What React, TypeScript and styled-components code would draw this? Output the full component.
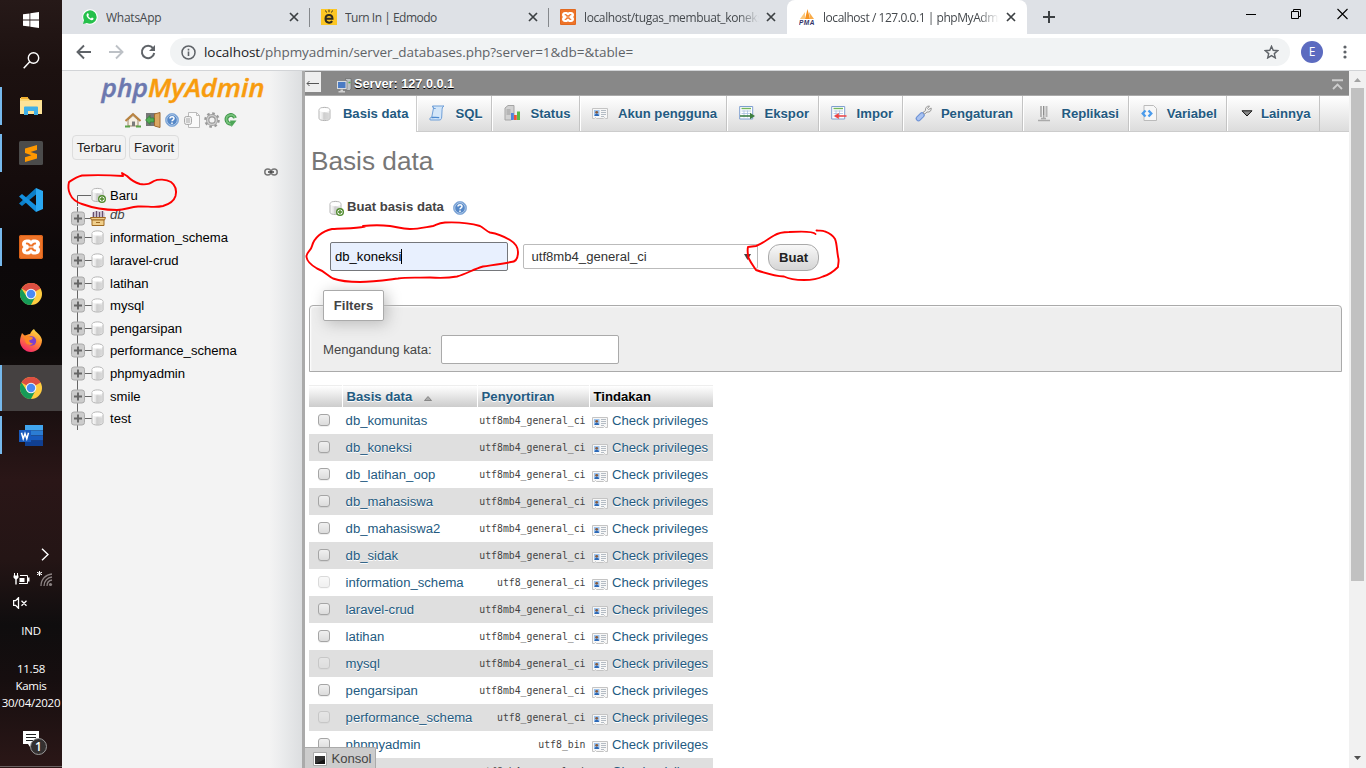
import React from 'react';
import styled, { createGlobalStyle, css } from 'styled-components';

const ui = `"Open Sans", "Noto Sans", sans-serif`;
const arial = `"Liberation Sans", Arial, sans-serif`;

const Global = createGlobalStyle`
  * { box-sizing: border-box; }
  html, body { margin: 0; padding: 0; overflow: hidden; }
  body { background: #fff; font-family: ${arial}; font-size: 13.12px; color: #444; }
  svg { display: block; flex: none; }
`;

const Screen = styled.div`
  position: relative;
  display: flex;
  width: 1366px;
  height: 768px;
  overflow: hidden;
`;

/* ---------- Windows taskbar ---------- */
const Taskbar = styled.aside`
  display: flex;
  flex-direction: column;
  width: 62px;
  flex: none;
  color: #fff;
  font-family: ${ui};
  font-size: 12px;
  background: linear-gradient(180deg, #261918 0, #1c1110 70px, #150c0c 180px, #0c0809 260px, #0d0a0a 350px, #2a1617 480px, #241515 560px, #0f0d0e 625px, #160e0f 680px, #2b1717 768px);
`;
const TaskButton = styled.div<{ $h: number; $run?: number; $active?: boolean }>`
  display: flex;
  align-items: center;
  justify-content: center;
  height: ${p => p.$h}px;
  background: ${p => (p.$active ? '#454141' : 'transparent')};
  ${p => p.$run && css`box-shadow: inset 2px 0 #76b9ed;`}
`;
const TaskGap = styled.div<{ $h: number }>`height: ${p => p.$h}px;`;
const TrayRow = styled.div<{ $h: number; $l: number }>`
  display: flex;
  align-items: center;
  gap: 7px;
  height: ${p => p.$h}px;
  padding-left: ${p => p.$l}px;
`;
const TrayText = styled.div<{ $h: number; $ls?: number }>`
  height: ${p => p.$h}px;
  line-height: ${p => p.$h}px;
  text-align: center;
  font-size: 11.5px;
  letter-spacing: ${p => p.$ls ?? -0.25}px;
  white-space: nowrap;
`;

/* ---------- Browser chrome ---------- */
const Browser = styled.div`
  display: flex;
  flex-direction: column;
  width: 1304px;
  flex: none;
`;
const TabStrip = styled.div`
  display: flex;
  height: 34px;
  background: #dee1e6;
  font-family: ${ui};
  font-size: 12px;
  color: #45494d;
`;
const BrowserTab = styled.div<{ $w: number; $active?: boolean; $sep?: boolean; $pad?: number }>`
  position: relative;
  display: flex;
  align-items: center;
  width: ${p => p.$w}px;
  padding: 0 11px 0 ${p => p.$pad ?? 11}px;
  ${p => p.$active && css`background: #fff; border-radius: 8px 8px 0 0;`}
  ${p => p.$sep && css`
    &::after { content: ''; position: absolute; right: 0; top: 8px; width: 1px; height: 19px; background: #85888c; }
  `}
`;
const TabTitle = styled.span<{ $ls?: number; $fade?: boolean }>`
  flex: 1;
  min-width: 0;
  margin: 0 7px 0 8px;
  overflow: hidden;
  white-space: nowrap;
  letter-spacing: ${p => p.$ls ?? 0}px;
  ${p => p.$fade && css`mask-image: linear-gradient(90deg, #000 88%, transparent 100%);`}
`;
const NewTab = styled.div`
  display: flex;
  align-items: center;
  width: 180px;
  padding-left: 16px;
`;
const WindowButtons = styled.div`
  display: flex;
  gap: 35px;
  padding: 8px 0 0 39px;
`;
const Toolbar = styled.div`
  display: flex;
  align-items: center;
  height: 37px;
  padding-left: 14px;
  border-bottom: 1px solid #d2d4d7;
  background: #fff;
`;
const NavIcons = styled.div`display: flex; gap: 16px; width: 94px;`;
const Omnibox = styled.div`
  display: flex;
  align-items: center;
  width: 1120px;
  height: 28px;
  padding: 0 11px;
  border-radius: 14px;
  background: #f1f3f4;
  font-family: ${ui};
  font-size: 13.5px;
  letter-spacing: -0.05px;
  color: #5f6368;
`;
const Url = styled.span`flex: 1; margin-left: 8px; b { font-weight: 400; color: #202124; }`;
const Avatar = styled.div`
  width: 22px;
  height: 22px;
  margin: 0 20px 0 11px;
  border-radius: 50%;
  background: #5c6bc0;
  color: #fff;
  font: 12px/22px ${ui};
  text-align: center;
`;
const Viewport = styled.div`display: flex; height: 697px;`;

/* ---------- Navigation panel ---------- */
const NavPanel = styled.nav`
  display: flex;
  flex-direction: column;
  width: 243px;
  height: 697px;
  flex: none;
  border-right: 3px solid #aaa;
  background: linear-gradient(90deg, #f3f3f3 208px, #ecedee 218px, #dcdee0 240px);
`;
const LogoBox = styled.div`height: 41px; padding: 5px 0 0 35px;`;
const IconLine = styled.div`display: flex; gap: 3.7px; padding-left: 63px; height: 23px;`;
const Pills = styled.div`display: flex; gap: 3px; padding-left: 10px; height: 31px;`;
const Pill = styled.div<{ $w: number }>`
  width: ${p => p.$w}px;
  height: 25px;
  border: 1px solid #ddd;
  border-radius: 4px;
  background: #f2f2f2;
  color: #222;
  line-height: 24px;
  text-align: center;
`;
const LinkLine = styled.div`
  display: flex;
  justify-content: flex-end;
  height: 18px;
  padding: 2px 24px 0 0;
`;
const Tree = styled.div`display: flex; flex-direction: column; padding-left: 9px; color: #000;`;
const TreeRow = styled.div<{ $h: number }>`
  display: flex;
  align-items: center;
  flex: none;
  height: ${p => p.$h}px;
`;
const Branch = styled.div<{ $dy?: number }>`position: relative; top: ${p => p.$dy ?? 0}px;`;
const TreeLabel = styled.span<{ $group?: boolean }>`
  margin-left: 4px;
  ${p => p.$group && css`font-style: italic; color: #444; margin-top: -4px;`}
`;

/* ---------- Main page ---------- */
const Page = styled.main`
  position: relative;
  display: flex;
  flex-direction: column;
  width: 1044px;
  height: 697px;
  overflow: hidden;
  background: #fff;
  > * { flex-shrink: 0; }
`;
const ServerBar = styled.header`
  display: flex;
  height: 25px;
  padding-right: 5px;
  border-bottom: 1px solid #aaa;
  background: #888;
  color: #fff;
  text-shadow: 0 1px 0 #000;
`;
const Collapse = styled.div`
  width: 16px;
  height: 20px;
  margin: 1px 15px 0 0;
  background: #eee;
`;
const ServerName = styled.span`flex: 1; padding: 6px 0 0 2px; line-height: 15px; font-size: 12.7px; font-weight: bold;`;
const TopMenu = styled.div`
  display: flex;
  height: 36px;
  border-bottom: 1px solid #ccc;
  background: linear-gradient(#fff, #dcdcdc);
`;
const MenuTab = styled.div<{ $w: number; $pad?: number; $padR?: number; $active?: boolean }>`
  display: flex;
  align-items: center;
  justify-content: space-between;
  width: ${p => p.$w}px;
  height: ${p => (p.$active ? 36 : 35)}px;
  padding: 0 ${p => p.$padR ?? 9}px 1px ${p => p.$pad ?? 12}px;
  border-right: 1px solid ${p => (p.$active ? '#ccc' : '#c4c4c4')};
  box-shadow: ${p => (p.$active ? 'none' : 'inset 1px 0 #fff')};
  background: ${p => (p.$active ? '#fff' : 'transparent')};
  color: #235a81;
  font-weight: bold;
  white-space: nowrap;
  text-shadow: 0 1px 0 #fff;
`;
const Title = styled.h2`
  height: 52px;
  margin: 0;
  padding: 13px 0 0 6px;
  color: #777;
  font-size: 26.2px;
  line-height: 32px;
  font-weight: normal;
  text-shadow: 0 1px 0 #fff;
`;
const CreateHead = styled.div`
  display: flex;
  height: 58px;
  padding: 15px 0 0 24px;
  font-weight: bold;
  line-height: 16px;
  b { margin: 0 8px 0 3px; }
  svg { margin-top: 1px; }
`;
const CreateForm = styled.div`display: flex; align-items: flex-start; height: 63px; padding-left: 25px;`;
const TextBox = styled.div<{ $fill?: boolean }>`
  display: flex;
  align-items: center;
  width: 178px;
  height: 29px;
  padding-left: 4px;
  border: 1px solid ${p => (p.$fill ? '#75777b' : '#aaa')};
  border-radius: 2px;
  background: ${p => (p.$fill ? '#e8f0fe' : '#fff')};
  color: #000;
`;
const Caret = styled.i`width: 1px; height: 15px; background: #000;`;
const SelectBox = styled.div`
  display: flex;
  align-items: center;
  justify-content: space-between;
  width: 235px;
  height: 25px;
  margin: 2px 10px 0 15px;
  padding: 0 6px 0 7.5px;
  border: 1px solid #bbb;
  border-radius: 2px;
  color: #333;
`;
const CreateButton = styled.div`
  width: 51px;
  height: 27px;
  margin-top: 2px;
  border: 1px solid #aaa;
  border-radius: 12px;
  background: linear-gradient(#f8f8f8, #d5d5d5);
  color: #222;
  font-weight: bold;
  line-height: 26px;
  text-align: center;
`;
const Fieldset = styled.section`
  width: 1033px;
  height: 67px;
  margin: 0 0 13px 4px;
  padding-left: 13px;
  border: 1px solid #aaa;
  border-radius: 4px 4px 0 0;
  background: #eee;
  box-shadow: inset 1px 1px 2px #fff;
`;
const Legend = styled.div`
  width: 61px;
  height: 31px;
  margin-top: -16px;
  border: 1px solid #aaa;
  border-radius: 2px;
  background: #fff;
  box-shadow: 3px 3px 15px #bbb;
  font-weight: bold;
  line-height: 30px;
  text-align: center;
`;
const FilterLine = styled.div`display: flex; align-items: center; gap: 9px; margin-top: 14px;`;
const Grid = styled.div`width: 404px; margin-left: 4px; text-shadow: 0 1px 0 #fff;`;
const cols = css`display: grid; grid-template-columns: 33px 134px 111px 123px; column-gap: 1px;`;
const HeadRow = styled.div`
  ${cols}
  height: 22px;
  font-weight: bold;
  color: #235a81;
`;
const HeadCell = styled.div<{ $plain?: boolean }>`
  display: flex;
  align-items: center;
  gap: 12px;
  padding: 0 0 0 3.6px;
  background: linear-gradient(#fff, #ccc);
  border-top: 1px solid #eee;
  color: ${p => (p.$plain ? '#000' : 'inherit')};
  svg { margin-top: 4px; }
`;
const Row = styled.div<{ $odd: boolean }>`
  ${cols}
  align-items: center;
  height: 27px;
  background: ${p => (p.$odd ? '#dfdfdf' : '#fff')};
  color: #235a81;
`;
const Check = styled.i<{ $off: boolean }>`
  width: 12px;
  height: 12px;
  margin: 0 0 1px 9px;
  border: 1px solid #a5a5a5;
  border-radius: 3px;
  background: linear-gradient(#f0f0f0, #dcdcdc);
  box-shadow: 0 1px 0 rgba(0, 0, 0, 0.06);
  opacity: ${p => (p.$off ? 0.4 : 1)};
`;
const Name = styled.span`padding-left: 2.6px;`;
const Collation = styled.span`
  padding-right: 3.5px;
  color: #444;
  font-family: "DejaVu Sans Mono", monospace;
  font-size: 9.8px;
  text-align: right;
  text-shadow: none;
  white-space: nowrap;
`;
const Action = styled.span`
  display: flex;
  align-items: center;
  gap: 4px;
  padding-left: 2px;
  white-space: nowrap;
  svg { margin: 1px 0 -1px; }
`;
const Console = styled.div`
  position: absolute;
  left: 0;
  bottom: 0;
  display: flex;
  align-items: center;
  gap: 4.4px;
  width: 71px;
  height: 21px;
  padding: 1px 0 0 8px;
  border: 1px solid #aaa;
  border-width: 1px 1px 0 0;
  border-radius: 0 2px 0 0;
  background: #ccc;
`;
const Scrollbar = styled.div`
  display: flex;
  flex-direction: column;
  align-items: center;
  width: 17px;
  padding: 7px 0 8px;
  background: #f1f1f1;
`;
const Thumb = styled.div`width: 13px; height: 493px; margin: 6px 0 auto; background: #c1c1c1;`;
const Markup = styled.svg`
  position: absolute;
  left: 0;
  top: 0;
  pointer-events: none;
`;

/* ---------- Icons ---------- */
const Cross = ({ s = 10, c = '#3c4043', w = 1.7 }) => (
  <svg width={s} height={s} viewBox="0 0 10 10"><path d="M1 1l8 8M9 1L1 9" stroke={c} strokeWidth={w} /></svg>
);
const Db = ({ plus = false, w = 16 }) => (
  <svg width={w} height="16" viewBox={`0 0 ${w} 16`}>
    <defs><linearGradient id="cyl"><stop offset="0" stopColor="#fff" /><stop offset=".5" stopColor="#d8d8d8" /><stop offset="1" stopColor="#f4f4f4" /></linearGradient></defs>
    <path d="M1 4v8.300c0 3 11 3 11 0V4c0-3.500-11-3.500-11 0z" fill="url(#cyl)" stroke="#b4b4b4" />
    <ellipse cx="6.500" cy="4" rx="5" ry="2" fill="#fff" />
    <path d="M6 7v6.500M8 7v6.500M10 7v6" stroke="#c8c8c8" strokeWidth="1.100" />
    {plus && <><circle cx="11" cy="12" r="3.300" fill="#fff" stroke="#4f8a2c" strokeWidth="1.400" /><path d="M11 10v4M9 12h4" stroke="#4f8a2c" strokeWidth="1.400" /></>}
  </svg>
);
const Help = () => (
  <svg width="16" height="16" viewBox="0 0 16 16">
    <circle cx="8" cy="8" r="6.500" fill="#5688c7" stroke="#8fb2dd" />
    <circle cx="8" cy="8" r="5.300" fill="none" stroke="#c9dcf2" strokeWidth=".8" />
    <path d="M6 6.500c0-2.500 4.200-2.400 4 0-.1 1.300-2 1.300-2 2.800M8 10.500v1.500" fill="none" stroke="#fff" strokeWidth="1.500" />
  </svg>
);
const Card = () => (
  <svg width="16" height="16" viewBox="0 0 16 16">
    <path d="M.5 3.500h15v10h-2l-1-1-1 1h-7l-1-1-1 1h-2z" fill="#f7f7f7" stroke="#c4c4c4" />
    <path d="M2 5h5.500v6H2z" fill="#9cc3ee" /><circle cx="4.700" cy="7.300" r="1.400" fill="#8a5a3a" /><path d="M2.500 11c0-3 4.500-3 4.500 0z" fill="#2c68b5" />
    <path d="M9 5.500h5M9 7.500h5M9 9.500h5M9 11.500h3" stroke="#b4bcc4" />
  </svg>
);
const Chrome = () => (
  <svg width="22" height="22" viewBox="0 0 22 22">
    <circle cx="11" cy="11" r="11" fill="#ffcd40" />
    <path d="M11 11L1.470 5.500A11 11 0 0 1 20.530 5.500z" fill="#dd4f42" />
    <path d="M11 6h9.800A11 11 0 0 0 11 0z" fill="#dd4f42" />
    <path d="M1.470 5.500A11 11 0 0 0 11 22l4.400-8.500L11 11 6.700 13.500z" fill="#169b58" />
    <circle cx="11" cy="11" r="5.300" fill="#f4f4f4" /><circle cx="11" cy="11" r="4.200" fill="#4a8af4" />
  </svg>
);
const Xampp = ({ s = 24 }) => (
  <svg width={s} height={s} viewBox="0 0 24 24">
    <rect width="24" height="24" rx="2" fill="#ee7429" /><rect x=".5" y=".5" width="23" height="23" rx="2" fill="none" stroke="#d96118" />
    <path d="M7.500 4.500h2.500q2 0 2 2 0-2 2-2h2.500q4.500.5 4.500 4.500 0 2-1.500 3 1.500 1 1.500 3 0 4-4.500 4.500H14q-2 0-2-2 0 2-2 2H7.500Q3 19 3 15q0-2 1.500-3Q3 11 3 9q0-4 4.500-4.500z" fill="#fff" />
    <path d="M7.800 8.500q2.200 0 2.700 2h3q.5-2 2.700-2M7.800 15.500q2.200 0 2.700-2h3q.5 2 2.700 2" fill="none" stroke="#ee7429" strokeWidth="1.900" strokeLinecap="round" />
  </svg>
);
const Sheet = ({ imp = false }) => (
  <svg width="16" height="16" viewBox="0 0 16 16">
    <path d="M.7 1.500h13v12.500H.7z" fill="#fff" stroke="#7e9fd0" />
    <path d="M2.500 3.500h9.500" stroke="#73b65c" strokeWidth="1.400" />
    <path d="M2.500 6h9.500M2.500 8.500h9.500M2.500 11h9.500M5 5.500v7M8.500 5.500v7" stroke="#a9bfe0" strokeWidth=".8" />
    {imp
      ? <path d="M15.500 10.200H7.800V8L3 11l4.800 3v-2.300h7.700z" fill="#ef4444" />
      : <path d="M1 10.200h10V7.800l5 3.200-5 3.200v-2.400H1z" fill="#3d7f3f" />}
  </svg>
);
const Scroll = () => (
  <svg width="16" height="18" viewBox="0 0 16 18">
    <path d="M3.500 2h11.500c-2 1-1.800 2.500-2 5l-.3 6c-.2 2.500-1 3-2.700 3H1.200c-1-1.500 0-2.600 1.500-2.500L4.500 4z" fill="#d3e6f9" stroke="#6f9fd8" />
    <path d="M2.700 13.500c2-.2 6-.2 7.500.2" fill="none" stroke="#4d8ad0" strokeWidth="1.300" /><path d="M3.500 2l1.200 2.500h2" fill="none" stroke="#6f9fd8" />
  </svg>
);
const StatusIcon = () => (
  <svg width="17" height="16" viewBox="0 0 17 16">
    <path d="M1 3l3-2.500h6V13l-3 2H1z" fill="#d2d2d2" stroke="#a5a5a5" /><path d="M2.500 5h4M2.500 7h4M2.500 9h4" stroke="#999" />
    <path d="M7 8h2.800v7H7z" fill="#4e83dc" /><path d="M10 10h2.800v5H10z" fill="#ef5338" /><path d="M13 6.500h3V15h-3z" fill="#58b947" />
  </svg>
);
const Wrench = () => (
  <svg width="17" height="17" viewBox="0 0 17 17">
    <path d="M3.500 13.500L7 10" stroke="#6f93d6" strokeWidth="5.500" strokeLinecap="round" />
    <path d="M3.500 13.500L7 10" stroke="#a9c2f0" strokeWidth="3.200" strokeLinecap="round" />
    <path d="M8 7.500l2.500-2C10 3 11.500 1 14.500 1l-2 2.500 1 1L16.200 3c.3 3-1.500 4.500-4.200 4L9.800 9z" fill="#eee" stroke="#999" />
  </svg>
);
const Repl = () => (
  <svg width="14" height="17" viewBox="0 0 14 17">
    <path d="M4 1v11M9.500 1v11" stroke="#b5b5b5" strokeWidth="2" /><path d="M6.700 1v9" stroke="#888" strokeWidth="1.300" />
    <path d="M6.700 10v4M1 15.500h12M4 13.500h5" stroke="#aaa" strokeWidth="1.500" />
  </svg>
);
const Code = () => (
  <svg width="17" height="16" viewBox="0 0 17 16">
    <path d="M3 .5h9.500l3 3v12H3z" fill="#f7f7f7" stroke="#bbb" />
    <path d="M4.500 5.500L1.700 8.500l2.800 3M7.500 5.500l2.800 3-2.800 3" fill="none" stroke="#4a9bec" strokeWidth="2.300" />
  </svg>
);
const BranchBox = () => (
  <>
    <path d="M6.500 0v23M13 11.500h8" stroke="#666" />
    <rect x=".5" y="5" width="13" height="13" rx="2.500" fill="#ccc" stroke="#aaa" />
    <path d="M7 7.500v8M3 11.500h8" stroke="#666" strokeWidth="1.900" />
  </>
);
const PlusBranch = () => (
  <svg width="35" height="23" viewBox="0 0 35 23">
    <BranchBox />
    <g transform="translate(20 3.500)"><Db w={14} /></g>
  </svg>
);
const GroupBranch = () => (
  <svg width="35" height="23" viewBox="0 0 35 23">
    <BranchBox />
    <path d="M21 10V6l3-2h8l2 2v4z" fill="#d8d1dc" /><path d="M22.500 5v5M25.500 4v6M28.500 5v5M31.500 4v6" stroke="#69506e" strokeWidth="1.300" />
    <path d="M19.500 10.500h15l-1 2.500H20.500z" fill="#f0cf8b" stroke="#a06a22" /><path d="M21 13h12v5.500H21z" fill="#f0cf8b" stroke="#a06a22" /><path d="M25 15.500h4" stroke="#a06a22" />
  </svg>
);

const databases: [string, string, boolean][] = [
  ['db_komunitas', 'utf8mb4_general_ci', false], ['db_koneksi', 'utf8mb4_general_ci', false],
  ['db_latihan_oop', 'utf8mb4_general_ci', false], ['db_mahasiswa', 'utf8mb4_general_ci', false],
  ['db_mahasiswa2', 'utf8mb4_general_ci', false], ['db_sidak', 'utf8mb4_general_ci', false],
  ['information_schema', 'utf8_general_ci', true], ['laravel-crud', 'utf8mb4_general_ci', false],
  ['latihan', 'utf8mb4_general_ci', false], ['mysql', 'utf8mb4_general_ci', true],
  ['pengarsipan', 'utf8mb4_general_ci', false], ['performance_schema', 'utf8_general_ci', true],
  ['phpmyadmin', 'utf8_bin', false], ['smile', 'utf8mb4_general_ci', false],
];
const treeItems = ['information_schema', 'laravel-crud', 'latihan', 'mysql', 'pengarsipan', 'performance_schema', 'phpmyadmin', 'smile', 'test'];

const WindowsTaskbar = () => (
  <Taskbar>
    <TaskButton $h={39}><svg width="16" height="16" viewBox="0 0 16 16" fill="#fff"><path d="M0 2.300l6.500-.9v6.200H0zM7.300 1.200L16 0v7.600H7.300zM0 8.400h6.500v6.200L0 13.700zM7.300 8.400H16V16l-8.700-1.200z" /></svg></TaskButton>
    <TaskButton $h={42}><svg width="17" height="17" viewBox="0 0 17 17"><circle cx="10.500" cy="6" r="5.200" fill="none" stroke="#fff" strokeWidth="1.400" /><path d="M6.700 9.800L.7 16.200" stroke="#fff" strokeWidth="1.500" /></svg></TaskButton>
    <TaskGap $h={6} />
    <TaskButton $h={38} $run={1}>
      <svg width="22" height="19" viewBox="0 0 22 19"><path d="M0 1h8l2 2h12v14H0z" fill="#fbd775" /><path d="M1 0h7v2H1z" fill="#f2b130" /><path d="M0 4h22v13H0z" fill="#fde398" /><path d="M4 10.500q0-1 1-1h12q1 0 1 1V18h-4v-4H8v4H4z" fill="#3fb0e8" /></svg>
    </TaskButton>
    <TaskGap $h={9} />
    <TaskButton $h={38} $run={1}>
      <svg width="24" height="24" viewBox="0 0 24 24"><rect width="24" height="24" rx="1.500" fill="#4b4b4b" /><path d="M6 7.500L18 4v5l-6.500 2L18 13v4.500L6 21v-4.800l6.500-2L6 12z" fill="#ff9800" /></svg>
    </TaskButton>
    <TaskGap $h={9} />
    <TaskButton $h={38}>
      <svg width="24" height="24" viewBox="0 0 24 24"><path d="M17 0l7 3v18l-7 3z" fill="#2aa8f2" /><path d="M17 0v6.500L3 18l-3-2.500z" fill="#0b7fc9" /><path d="M17 24v-6.500L3 6 0 8.500z" fill="#1490df" /></svg>
    </TaskButton>
    <TaskGap $h={9} />
    <TaskButton $h={38} $run={1}><Xampp /></TaskButton>
    <TaskGap $h={9} />
    <TaskButton $h={38}><Chrome /></TaskButton>
    <TaskGap $h={8} />
    <TaskButton $h={38}>
      <svg width="22" height="23" viewBox="0 0 22 23">
        <defs><linearGradient id="fx" x1=".8" y1="0" x2=".3" y2="1"><stop offset="0" stopColor="#ffe44a" /><stop offset=".45" stopColor="#ff9030" /><stop offset="1" stopColor="#f5246b" /></linearGradient></defs>
        <path d="M2 4l3 3c1-1 3-2 5-2 1-2 2-4 4-5 1 3 7 5 8 11 0 7-5 12-11 12S0 18 0 12c0-3 1-5 2-8z" fill="url(#fx)" />
        <circle cx="11.500" cy="12" r="4.700" fill="#7a3fd0" /><path d="M3 7c3-1 6 0 7 1 2 0 3 .5 3 1-1 2-3 2-4 2.500.5 2 2 3 4 3-3 3-8 1-8-4z" fill="#ff8a25" />
      </svg>
    </TaskButton>
    <TaskGap $h={6} />
    <TaskButton $h={46} $run={1} $active><Chrome /></TaskButton>
    <TaskGap $h={5} />
    <TaskButton $h={38} $run={1}>
      <svg width="24" height="21" viewBox="0 0 24 21"><path d="M6 0h18v5.300H6z" fill="#41a5ee" /><path d="M6 5.300h18v5.200H6z" fill="#2b7cd3" /><path d="M6 10.500h18v5.200H6z" fill="#185abd" /><path d="M6 15.700h18V21H6z" fill="#103f91" /><path d="M0 5h12v12H0z" fill="#185abd" /><path d="M2.500 7.800l1.700 6L6 8.500l1.800 5.300 1.700-6" fill="none" stroke="#fff" strokeWidth="1.500" /></svg>
    </TaskButton>
    <TaskGap $h={88} />
    <TrayRow $h={25} $l={41}><svg width="8" height="13" viewBox="0 0 8 13"><path d="M1 .7l6 5.800-6 5.800" fill="none" stroke="#fff" strokeWidth="1.400" /></svg></TrayRow>
    <TrayRow $h={24} $l={13}>
      <svg width="17" height="12" viewBox="0 0 17 12"><path d="M7 2.500h7.500v8H6" fill="none" stroke="#fff" /><path d="M6.500 5h5v4h-5zM15 4.500h1.500v4H15z" fill="#fff" /><path d="M1.500 0v3M4.500 0v3" stroke="#fff" /><path d="M.5 2.500h5v2L3.700 6.500v5H2.300v-5L.5 4.500z" fill="#fff" /></svg>
      <svg width="17" height="16" viewBox="0 0 17 16"><path d="M2.500 0v5M0 1.200l5 2.600M5 1.200L0 3.800" stroke="#fff" /><path d="M4 15C4 8 9 3.500 15 3M7 15c0-5 3.500-8.500 8-9M10 15c0-3 2-5.500 5-6" fill="none" stroke="#8b8383" strokeWidth="1.300" /><circle cx="13.500" cy="13.500" r="1.600" fill="#8b8383" /></svg>
    </TrayRow>
    <TrayRow $h={24} $l={13}><svg width="15" height="12" viewBox="0 0 15 12"><path d="M.6 3.700h2L5.500.7v10.600l-2.900-3h-2zM8.500 3.700l5 5M13.500 3.700l-5 5" fill="none" stroke="#fff" strokeWidth="1.300" /></svg></TrayRow>
    <TaskGap $h={6} />
    <TrayText $h={20}>IND</TrayText>
    <TaskGap $h={19} />
    <TrayText $h={17}>11.58</TrayText>
    <TrayText $h={17}>Kamis</TrayText>
    <TrayText $h={17}>30/04/2020</TrayText>
    <TaskGap $h={18} />
    <TrayRow $h={26} $l={23}>
      <svg width="24" height="25" viewBox="0 0 24 25"><path d="M0 1h16v13h-6l-3 3-2-3H0z" fill="#fff" /><path d="M3 4.500h10M3 7.500h10M3 10.500h7" stroke="#222" /><circle cx="15.500" cy="16.500" r="8" fill="#343030" stroke="#999" /><text x="15.500" y="21" fill="#fff" fontFamily="Open Sans" fontSize="12" fontWeight="600" textAnchor="middle">1</text></svg>
    </TrayRow>
    <TaskGap $h={11} />
    <svg width="62" height="1"><path d="M0 .5h62" stroke="#6b6262" /></svg>
  </Taskbar>
);

const BrowserHeader = () => (
  <>
    <TabStrip>
      <BrowserTab $w={248} $sep $pad={20}>
        <svg width="16" height="16" viewBox="0 0 16 16"><circle cx="8" cy="8" r="7.800" fill="#fff" /><path d="M1 15l1-3.800A6.700 6.700 0 1 1 4.800 14z" fill="#25c04b" /><path d="M5.200 4.500c1-.8 1.500.6 1.700 1.500l-.7 1c.6 1.200 1.600 2 2.700 2.500l1-1c1 .3 2 .8 1.500 1.700-1 1.700-3.500.8-5-.6-1.600-1.500-2.700-3.800-1.200-5.100z" fill="#fff" /></svg>
        <TabTitle $ls={-0.25}>WhatsApp</TabTitle><Cross />
      </BrowserTab>
      <BrowserTab $w={239} $sep>
        <svg width="16" height="16" viewBox="0 0 16 16"><rect width="16" height="16" fill="#fcc623" /><path d="M4.500 9.700h7c0-5-7-5-7 0 0 4.500 5 4.800 6.700 2.500" fill="none" stroke="#2f2b20" strokeWidth="2" /><path d="M8 .7v2.500M4.500 1.500l1 2M11.500 1.500l-1 2" stroke="#2f2b20" /></svg>
        <TabTitle $ls={-0.5}>Turn In | Edmodo</TabTitle><Cross />
      </BrowserTab>
      <BrowserTab $w={238}>
        <Xampp s={16} /><TabTitle $fade $ls={-0.38}>localhost/tugas_membuat_koneksi</TabTitle><Cross />
      </BrowserTab>
      <BrowserTab $w={240} $active $pad={12}>
        <svg width="16" height="16" viewBox="0 0 16 16"><path d="M1 10l5-7v7z" fill="#fbc77b" /><path d="M6 10L8.500 0 11 10z" fill="#f6921e" /><path d="M10 3l5 7h-4z" fill="#f9ac4a" /><text x="0" y="15.700" fontFamily="Liberation Sans" fontWeight="bold" fontStyle="italic" fontSize="6.500" textLength="15.500" fill="#333367">PMA</text></svg>
        <TabTitle $fade $ls={-0.45}>localhost / 127.0.0.1 | phpMyAdmin</TabTitle><Cross />
      </BrowserTab>
      <NewTab><svg width="12" height="12"><path d="M6 0v12M0 6h12" stroke="#3c4043" strokeWidth="2" /></svg></NewTab>
      <WindowButtons>
        <svg width="10" height="12"><path d="M0 6.500h10" stroke="#000" /></svg>
        <svg width="11" height="12"><path d="M.5 3.500h7v7h-7zM2.500 3.500v-2h7v7h-2" fill="none" stroke="#000" /></svg>
        <svg width="11" height="12"><path d="M.5 1l10 10M10.500 1l-10 10" stroke="#000" strokeWidth="1.100" /></svg>
      </WindowButtons>
    </TabStrip>
    <Toolbar>
      <NavIcons>
        <svg width="16" height="16" viewBox="0 0 16 16"><path d="M15 8H2M8 1.500L1.500 8 8 14.500" fill="none" stroke="#5f6368" strokeWidth="1.900" /></svg>
        <svg width="16" height="16" viewBox="0 0 16 16"><path d="M1 8h13M8 1.500L14.500 8 8 14.500" fill="none" stroke="#bdc1c6" strokeWidth="1.900" /></svg>
        <svg width="16" height="16" viewBox="0 0 16 16"><path d="M13 4.200A6.200 6.200 0 1 0 14.200 9" fill="none" stroke="#5f6368" strokeWidth="2" /><path d="M15 1v6H9z" fill="#5f6368" /></svg>
      </NavIcons>
      <Omnibox>
        <svg width="15" height="15" viewBox="0 0 15 15"><circle cx="7.500" cy="7.500" r="6.500" fill="none" stroke="#5f6368" strokeWidth="1.500" /><path d="M7.500 6.500v4.500M7.500 3.800v1.600" stroke="#5f6368" strokeWidth="1.600" /></svg>
        <Url><b>localhost</b>/phpmyadmin/server_databases.php?server=1&amp;db=&amp;table=</Url>
        <svg width="15" height="14" viewBox="0 0 15 14"><path d="M7.500 1.300l1.700 4 4.500.4-3.400 2.900 1 4.300-3.800-2.300-3.800 2.300 1-4.300-3.400-2.900 4.500-.4z" fill="none" stroke="#5f6368" strokeWidth="1.400" /></svg>
      </Omnibox>
      <Avatar>E</Avatar>
      <svg width="4" height="14" fill="#5f6368"><circle cx="2" cy="2" r="1.600" /><circle cx="2" cy="7" r="1.600" /><circle cx="2" cy="12" r="1.600" /></svg>
    </Toolbar>
  </>
);

const Navigation = () => (
  <NavPanel>
    <LogoBox>
      <svg width="172" height="34" viewBox="-2 0 172 34" fontFamily="Open Sans" fontWeight="600" fontStyle="italic" fontSize="24.500">
        <text x="2.500" y="20.700" fill="#6c78af" stroke="#6c78af" strokeWidth=".4" textLength="46.500" lengthAdjust="spacingAndGlyphs">php</text>
        <text x="49" y="20.700" fill="#f89c0e" stroke="#f89c0e" strokeWidth=".4" textLength="116.500" lengthAdjust="spacingAndGlyphs">MyAdmin</text>
      </svg>
    </LogoBox>
    <IconLine>
      <svg width="16" height="16" viewBox="0 0 16 16"><path d="M3 8v6h10V8L8 3.500z" fill="#f6efe2" stroke="#a08a6a" /><path d="M.5 9L8 2l7.500 7" fill="none" stroke="#b98340" strokeWidth="2" /><path d="M7 9.500h3V14H7z" fill="#7a7a7a" /><path d="M0 14.500h5M11 14.500h5" stroke="#5ca34a" strokeWidth="2" /></svg>
      <svg width="16" height="16" viewBox="0 0 16 16"><path d="M1 1h10v13H1z" fill="#777" /><path d="M9.500 2l5.500-1.500v15L9.500 14z" fill="#dca763" stroke="#a06a30" /><path d="M9 6H5V3.500L.5 8 5 12.500V10h4z" fill="#53ae55" stroke="#26772c" strokeWidth=".6" /></svg>
      <Help />
      <svg width="16" height="16" viewBox="0 0 16 16"><path d="M4.500.5h8l3 3v12h-11z" fill="#fafafa" stroke="#bbb" /><path d="M12.500.5v3h3" fill="none" stroke="#bbb" /><rect x=".5" y="4.500" width="7" height="8" rx="2" fill="#eee" stroke="#aaa" /><path d="M3 6v5M5 6v5" stroke="#aaa" /></svg>
      <svg width="16" height="16" viewBox="0 0 16 16"><circle cx="8" cy="8" r="6.700" fill="none" stroke="#999" strokeWidth="2.200" strokeDasharray="2.630 2.630" /><circle cx="8" cy="8" r="4.300" fill="none" stroke="#999" strokeWidth="3.400" /><circle cx="8" cy="8" r="4.500" fill="none" stroke="#ccc" strokeWidth="1.600" /></svg>
      <svg width="16" height="16" viewBox="0 0 16 16"><path d="M12 6A4.400 4.400 0 1 0 8 11.800" fill="none" stroke="#3e9348" strokeWidth="3.800" /><path d="M12 6A4.400 4.400 0 1 0 8 11.800" fill="none" stroke="#76c37b" strokeWidth="1.800" /><path d="M7 8.500h6.500L8.500 15z" fill="#4da657" /></svg>
    </IconLine>
    <Pills><Pill $w={54}>Terbaru</Pill><Pill $w={50}>Favorit</Pill></Pills>
    <LinkLine><svg width="14" height="8" viewBox="0 0 14 8"><rect x=".8" y="1" width="6" height="6" rx="3" fill="none" stroke="#777" strokeWidth="1.500" /><rect x="7.200" y="1" width="6" height="6" rx="3" fill="none" stroke="#777" strokeWidth="1.500" /><path d="M4 4h6" stroke="#444" strokeWidth="1.500" /></svg></LinkLine>
    <Tree>
      <TreeRow $h={22}>
        <Branch><svg width="35" height="22" viewBox="0 0 35 22"><path d="M6.500 22V11.500H20" fill="none" stroke="#666" /><g transform="translate(20 3)"><Db plus /></g></svg></Branch>
        <TreeLabel>Baru</TreeLabel>
      </TreeRow>
      <TreeRow $h={20.5}><Branch $dy={2}><GroupBranch /></Branch><TreeLabel $group>db</TreeLabel></TreeRow>
      {treeItems.map(t => (
        <TreeRow key={t} $h={22.63}><Branch><PlusBranch /></Branch><TreeLabel>{t}</TreeLabel></TreeRow>
      ))}
    </Tree>
  </NavPanel>
);

const MainPage = () => (
  <Page>
    <ServerBar>
      <Collapse><svg width="16" height="20" viewBox="0 0 16 20"><path d="M14 11.500H2M4.500 9L2 11.500 4.500 14" fill="none" stroke="#555" /></svg></Collapse>
      <svg width="16" height="16" viewBox="0 0 16 16" style={{ marginTop: 7 }}><path d="M9.500.5H15v10.500l-1.500 1.500h-4z" fill="#bfc3c6" stroke="#6c6c6c" strokeWidth=".7" /><path d="M.5 2.500h10.500v9H.5z" fill="#d9dcdf" stroke="#777" strokeWidth=".7" /><path d="M2 4h7.500v6H2z" fill="#4a7bc4" /><path d="M4.500 11.500h2.500V13H9v1.500H2.500V13h2z" fill="#d0d0d0" /><path d="M12.500 4.500h2" stroke="#4cae4c" strokeWidth="1.500" /></svg>
      <ServerName>Server: 127.0.0.1</ServerName>
      <svg width="13" height="12" viewBox="0 0 13 12" style={{ marginTop: 8 }}><path d="M1 1.200h11M2 10l4.500-4.500L11 10" fill="none" stroke="#ccc" strokeWidth="1.900" /></svg>
    </ServerBar>
    <TopMenu>
      <MenuTab $w={112} $active $pad={13} $padR={7.5}><Db />Basis data</MenuTab>
      <MenuTab $w={75} $padR={8.5}><Scroll />SQL</MenuTab>
      <MenuTab $w={88} $padR={8.5}><StatusIcon />Status</MenuTab>
      <MenuTab $w={147}><Card />Akun pengguna</MenuTab>
      <MenuTab $w={92}><Sheet />Ekspor</MenuTab>
      <MenuTab $w={84}><Sheet imp />Impor</MenuTab>
      <MenuTab $w={120}><Wrench />Pengaturan</MenuTab>
      <MenuTab $w={106} $pad={14}><Repl />Replikasi</MenuTab>
      <MenuTab $w={98}><Code />Variabel</MenuTab>
      <MenuTab $w={93} $pad={14} $padR={8.5}><svg width="12" height="7"><path d="M1 .8h10L6 6z" fill="#888" stroke="#111" /></svg>Lainnya</MenuTab>
    </TopMenu>
    <Title>Basis data</Title>
    <CreateHead><Db plus w={15} /><b>Buat basis data</b><Help /></CreateHead>
    <CreateForm>
      <TextBox $fill>db_koneksi<Caret /></TextBox>
      <SelectBox>utf8mb4_general_ci<svg width="7" height="6"><path d="M0 0h7L3.500 6z" fill="#444" /></svg></SelectBox>
      <CreateButton>Buat</CreateButton>
    </CreateForm>
    <Fieldset>
      <Legend>Filters</Legend>
      <FilterLine>Mengandung kata:<TextBox /></FilterLine>
    </Fieldset>
    <Grid>
      <HeadRow>
        <HeadCell />
        <HeadCell>Basis data<svg width="8" height="5"><path d="M.5 4.500h7L4 .5z" fill="#aaa" stroke="#777" strokeWidth=".8" /></svg></HeadCell>
        <HeadCell>Penyortiran</HeadCell>
        <HeadCell $plain>Tindakan</HeadCell>
      </HeadRow>
      {databases.map(([name, coll, off], i) => (
        <Row key={name} $odd={i % 2 === 1}>
          <Check $off={off} /><Name>{name}</Name><Collation>{coll}</Collation><Action><Card />Check privileges</Action>
        </Row>
      ))}
    </Grid>
    <Console><svg width="14" height="14" viewBox="0 0 14 14"><path d="M.5.500h13v13H.5z" fill="#fff" stroke="#aaa" /><path d="M2 4h10v8H2z" fill="#333" /><path d="M2 12l10-5v5z" fill="#151515" /></svg>Konsol</Console>
  </Page>
);

export default function App() {
  return (
    <>
      <Global />
      <Screen>
        <WindowsTaskbar />
        <Browser>
          <BrowserHeader />
          <Viewport>
            <Navigation />
            <MainPage />
            <Scrollbar>
              <svg width="7" height="4"><path d="M0 4h7L3.500 0z" fill="#a3a3a3" /></svg>
              <Thumb />
              <svg width="7" height="4"><path d="M0 0h7L3.500 4z" fill="#505050" /></svg>
            </Scrollbar>
          </Viewport>
        </Browser>
        <Markup width="1366" height="768" fill="none" stroke="#f00" strokeWidth="1.900" strokeLinecap="round" strokeLinejoin="round">
          <path d="M122 173l1 3C108 175 94 175 82 175.500C76 177 72 180 69 182C68 186 68 190 70 194C72 199 76 202 82 204C93 208 105 210 117 210C125 210 130 207 138 206.500C147 206 155 208 163 206C170 204 174 201 175.500 196C177 190 175 185 171 182C166 179 158 179 154 181C150 184 145 185 140 184C133 182 129 178 127 176z" />
          <path d="M363 226C372 225 382 225 390 226C397 227 402 229 410 229C419 229 426 227 433 226C438 224 439 223 445 222.500C457 222 470 223 480 226C484 228 486 231 490 232.500C499 234 505 237 510 240C515 243 518 247 518 252C518 258 516 262 511 262C502 264 493 265 483 266.500C474 269 466 274 457 276.500C449 278 438 278 430 277.500C418 278 407 277 398 278.500C386 280 373 282 360 282C349 282 340 281 333 278.500C327 275 324 271 317 268.500C311 265 307 261 306.500 257C306 252 311 251 312 246C314 238 322 231 332 229C344 228 354 229 365 226.500" />
          <path d="M815.500 234C813 231 797 231.500 789 232C783 232 778 233 774 235.500C768 239 762 244 756 246L748 247C747 251 748 255 748.500 258C751 263 754 267 756 270C765 273 775 276 784 276.500C789 279 796 280 804 280C811 280 818 279 823 276.500C829 275 834 271 838 267C838 264 839 262 838.500 259C837 253 837 243 835 239C832 234 829 233 825 231.500C822 230 819 231 816.500 230.500" />
        </Markup>
      </Screen>
    </>
  );
}
